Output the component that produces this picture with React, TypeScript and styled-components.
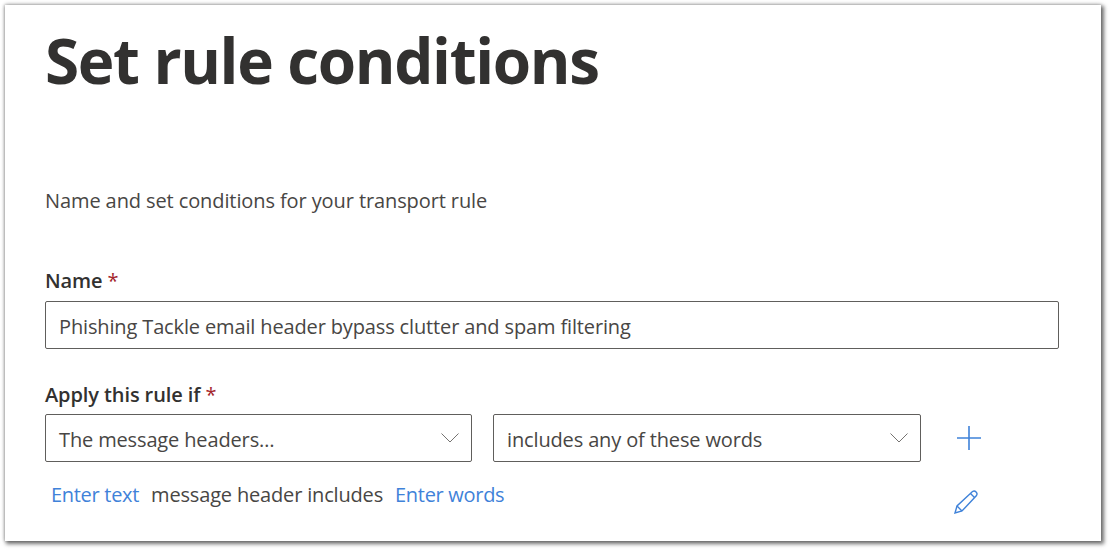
import React from 'react';
import styled, { createGlobalStyle } from 'styled-components';

const Global = createGlobalStyle`
  html, body {
    margin: 0;
    height: 100%;
    background: #fff;
    font-family: "Open Sans", "Noto Sans", sans-serif;
  }
`;

const Card = styled.div`
  box-sizing: border-box;
  width: 1096px;
  height: 536px;
  margin: 5px 0 0 5px;
  padding: 0 42px 0 40px;
  background: #fff;
  overflow: hidden;
  box-shadow: 2px 2px 4px 1px rgba(0, 0, 0, 0.55), 0 -1px 4px rgba(0, 0, 0, 0.15), -1px 0 3px rgba(0, 0, 0, 0.15);
`;

const Title = styled.h1`
  margin: 13px 0 0;
  font-size: 62px;
  line-height: 84px;
  font-weight: 700;
  letter-spacing: -1.35px;
  color: #323130;
`;

const Subtitle = styled.p`
  margin: 86px 0 0;
  font-size: 20px;
  line-height: 26px;
  letter-spacing: -0.1px;
  color: #484644;
`;

const Label = styled.label<{ $top: number }>`
  display: block;
  margin-top: ${(p) => p.$top}px;
  font-size: 20px;
  line-height: 26px;
  font-weight: 600;
  letter-spacing: -0.1px;
  color: #323130;
`;

const Star = styled.span`
  color: #a4262c;
  font-weight: 400;
`;

const Field = styled.div<{ $width: number }>`
  box-sizing: border-box;
  display: flex;
  align-items: center;
  justify-content: space-between;
  width: ${(p) => p.$width}px;
  height: 48px;
  padding: 2px 11px 0 13px;
  border: 1px solid #605e5c;
  border-radius: 2px;
  font-size: 20px;
  letter-spacing: -0.14px;
  color: #484644;
  white-space: nowrap;
`;

const NameField = styled(Field)`
  margin-top: 7px;
`;

const Row = styled.div`
  display: flex;
  align-items: center;
  gap: 21px;
  margin-top: 6px;
`;

const IconButton = styled.button`
  display: flex;
  align-items: center;
  justify-content: center;
  width: 24px;
  height: 24px;
  padding: 0;
  border: 0;
  background: none;
  color: #3f82d9;
`;

const AddButton = styled(IconButton)`
  margin-left: 15px;
`;

const Tokens = styled.div`
  display: flex;
  align-items: flex-start;
  justify-content: space-between;
  width: 933px;
  margin-top: 20px;
`;

const Sentence = styled.div`
  display: flex;
  gap: 12px;
  margin-left: 6px;
  font-size: 20px;
  line-height: 26px;
  color: #484644;
`;

const TokenLink = styled.a`
  letter-spacing: -0.3px;
  color: #3f82d9;
`;

const TokenText = styled.span`
  letter-spacing: -0.17px;
`;

const EditButton = styled(IconButton)`
  margin-top: 8px;
`;

const Chevron = () => (
  <svg width="20" height="20" viewBox="0 0 20 20" fill="none" stroke="#757371" strokeWidth="1">
    <path d="M1.500 4.500 10 13l8.500-8.500" />
  </svg>
);

export default function App() {
  return (
    <>
      <Global />
      <Card>
        <Title>Set rule conditions</Title>
        <Subtitle>Name and set conditions for your transport rule</Subtitle>
        <Label $top={54}>
          Name <Star>*</Star>
        </Label>
        <NameField $width={1014}>Phishing Tackle email header bypass clutter and spam filtering</NameField>
        <Label $top={33}>
          Apply this rule if <Star>*</Star>
        </Label>
        <Row>
          <Field $width={427}>
            The message headers…
            <Chevron />
          </Field>
          <Field $width={428}>
            includes any of these words
            <Chevron />
          </Field>
          <AddButton aria-label="Add">
            <svg width="24" height="24" viewBox="0 0 24 24" fill="none" stroke="currentColor" strokeWidth="1.600">
              <path d="M12 0v24M0 12h24" />
            </svg>
          </AddButton>
        </Row>
        <Tokens>
          <Sentence>
            <TokenLink>Enter text</TokenLink>
            <TokenText>message header includes</TokenText>
            <TokenLink>Enter words</TokenLink>
          </Sentence>
          <EditButton aria-label="Edit">
            <svg width="24" height="24" viewBox="0 0 24 24" fill="none" stroke="currentColor" strokeWidth="1.400">
              <path d="M1 23 3 16 18.500 1.500a2.900 2.900 0 0 1 4 4L8 21Z" />
              <path d="M3 16 8 21M16.500 3.500l4 4" />
            </svg>
          </EditButton>
        </Tokens>
      </Card>
    </>
  );
}
